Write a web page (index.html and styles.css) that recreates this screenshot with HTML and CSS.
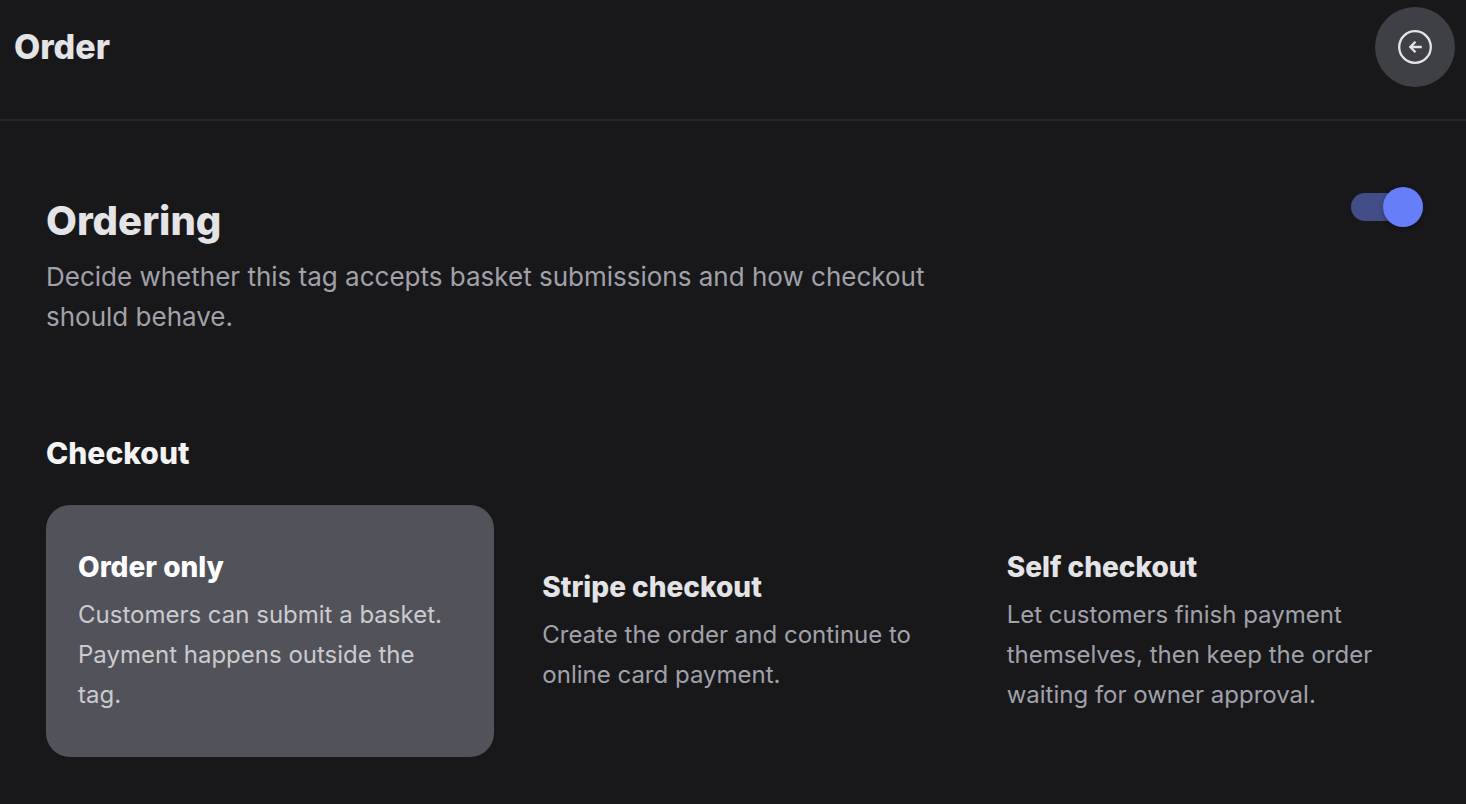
FILE: index.html
```html
<!DOCTYPE html>
<html lang="en">
<head>
  <meta charset="UTF-8" />
  <meta name="viewport" content="width=device-width, initial-scale=1" />
  <title>Order</title>
  <link rel="stylesheet" href="styles.css">
</head>
<body>
  <header class="topbar">
    <h1>Order</h1>
    <button type="button" class="back" aria-label="Back">
      <svg viewBox="0 0 40 40" width="40" height="40" fill="none" stroke="currentColor" stroke-width="2.3" stroke-linecap="butt" stroke-linejoin="miter">
        <circle cx="20" cy="20" r="15.8" />
        <path d="M26.800 20H15.500M20.500 14.800L15.300 20l5.200 5.200" />
      </svg>
    </button>
  </header>

  <main>
    <section class="ordering">
      <div class="intro">
        <h2>Ordering</h2>
        <p>Decide whether this tag accepts basket submissions and how checkout should behave.</p>
      </div>
      <input type="checkbox" class="switch" aria-label="Ordering" checked />
    </section>

    <section class="checkout">
      <h3>Checkout</h3>
      <div class="options">
        <button type="button" class="option selected" aria-pressed="true">
          <strong>Order only</strong>
          <span>Customers can submit a basket. Payment happens outside the tag.</span>
        </button>
        <button type="button" class="option" aria-pressed="false">
          <strong>Stripe checkout</strong>
          <span>Create the order and continue to online card payment.</span>
        </button>
        <button type="button" class="option" aria-pressed="false">
          <strong>Self checkout</strong>
          <span>Let customers finish payment themselves, then keep the order waiting for owner approval.</span>
        </button>
      </div>
    </section>
  </main>
</body>
</html>
```
FILE: styles.css
```css
* {
  box-sizing: border-box;
}
body {
  font-family: Inter, sans-serif;
  background: #18181b;
  margin: 0;
  color: #e4e4e7;
}
h1, h2, h3, p {
  margin: 0;
}
h1, h2, h3, strong {
  font-weight: 800;
}
button {
  font: inherit;
  color: inherit;
  border: none;
  cursor: pointer;
}
.topbar {
  display: flex;
  justify-content: space-between;
  align-items: flex-start;
  padding: 7px 11px 32px 14px;
  border-bottom: 2px solid #27272a;
}
h1 {
  font-size: 34px;
  line-height: 80px;
}
.back {
  display: flex;
  align-items: center;
  justify-content: center;
  width: 80px;
  height: 80px;
  padding: 0;
  border-radius: 50%;
  background: #3f3f46;
}
main {
  padding: 64px 43px 32px 46px;
}
.ordering {
  display: flex;
  justify-content: space-between;
  align-items: flex-start;
}
.intro {
  max-width: 896px;
  padding-top: 8px;
}
h2 {
  font-size: 40px;
  line-height: 56px;
}
.intro p {
  margin-top: 8px;
  font-size: 26px;
  line-height: 40px;
  color: #a1a1aa;
}
.switch {
  appearance: none;
  display: flex;
  align-items: center;
  justify-content: flex-end;
  width: 72px;
  height: 28px;
  margin: 8px 0 0;
  border-radius: 14px;
  background: #424c87;
  cursor: pointer;
}
.switch::before {
  content: "";
  width: 40px;
  height: 40px;
  border-radius: 50%;
  background: #667ff8;
  box-shadow: 0 2px 4px rgba(0,0,0,0.3);
}
.switch:not(:checked) {
  justify-content: flex-start;
  background: #3f3f46;
}
.checkout {
  margin-top: 96px;
}
h3 {
  font-size: 30px;
  line-height: 40px;
  color: #f4f4f5;
}
.options {
  display: grid;
  grid-template-columns: repeat(3, 1fr);
  gap: 16px;
  margin-top: 32px;
}
.option {
  display: flex;
  flex-direction: column;
  justify-content: center;
  padding: 42px 32px;
  border-radius: 24px;
  background: transparent;
  text-align: left;
}
.option strong {
  font-size: 28px;
  line-height: 40px;
}
.option span {
  margin-top: 8px;
  font-size: 24px;
  line-height: 40px;
  color: #a1a1aa;
}
.option.selected {
  background: #52525b;
}
.option.selected strong {
  color: #fff;
}
.option.selected span {
  color: #cbcbce;
}
```
